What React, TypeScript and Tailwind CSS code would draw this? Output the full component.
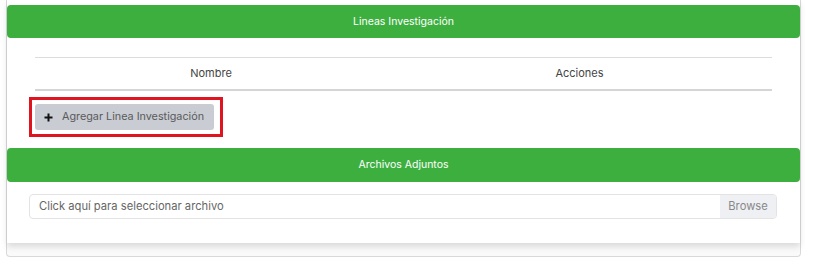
import React from "react";

const font = { fontFamily: "Inter, 'Noto Sans', sans-serif" };

export default function App() {
  return (
    <div className="w-[816px] h-[257px] bg-white overflow-hidden" style={font}>
      <div className="ml-[6px] w-[795px] h-[257px] border-x border-b border-[#d9d9d9] rounded-b-[4px] bg-[#fafafa]">
        <div className="bg-white h-[243px] pt-[5px] shadow-[0_4px_6px_rgba(0,0,0,0.12)]">
          <div className="h-[33px] bg-[#3daf3f] rounded-[4px] flex items-center justify-center text-white text-[10.5px]">
            Lineas Investigación
          </div>
          <div className="pt-[19px] px-[28px] pr-[28px]">
            <div className="flex h-[34px] border-t border-[#dcdcdc] border-b-2 border-b-[#d5d5d5] text-[11px] text-[#444]">
              <div className="w-[352px] flex items-center justify-center">Nombre</div>
              <div className="flex-1 flex items-center justify-center">Acciones</div>
            </div>
          </div>
          <div className="pl-[22px] pt-[6px]">
            <div className="w-[194px] h-[40px] border-[3px] border-[#e0141e] pl-[3px] pt-[4px]">
              <div className="w-[179px] h-[26px] rounded-[3px] bg-[#c9ccd3] flex items-center pl-[9px] gap-[9px] text-[10.8px] text-[#5a5a5a]">
                <svg width="9" height="9" viewBox="0 0 9 9">
                  <path d="M4.5 0.5v8M0.5 4.5h8" stroke="#111" strokeWidth="2" />
                </svg>
                <span>Agregar Linea Investigación</span>
              </div>
            </div>
          </div>
          <div className="mt-[11px] h-[34px] bg-[#3daf3f] rounded-[4px] flex items-center justify-center text-white text-[10.5px]">
            Archivos Adjuntos
          </div>
          <div className="pt-[12px] pl-[22px] pr-[23px]">
            <div className="flex h-[25px] border border-[#e3e3e3] rounded-[4px] overflow-hidden text-[11.2px]">
              <div className="flex-1 flex items-center pl-[9px] text-[#666]">Click aquí para seleccionar archivo</div>
              <div className="w-[56px] bg-[#eff0f4] flex items-center justify-center text-[#888]">
                Browse
              </div>
            </div>
          </div>
        </div>
      </div>
    </div>
  );
}
